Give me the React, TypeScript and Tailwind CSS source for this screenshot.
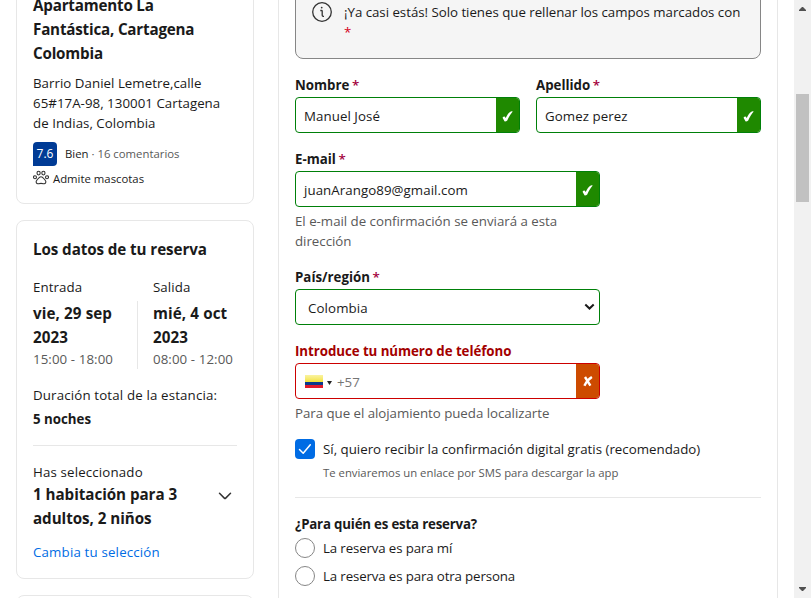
import type { ReactNode } from "react";

function Star({ className = "text-[#a3003c]" }: { className?: string }) {
  return <span className={className}>*</span>;
}

function Label({ children }: { children: ReactNode }) {
  return <div className="h-5 text-[13.3px]/5 font-bold whitespace-nowrap">{children} <Star className="-ml-px font-semibold text-[#a3003c]" /></div>;
}

function CheckMark() {
  return (
    <svg width="11" height="11" viewBox="0 0 12 12" fill="#fff">
      <path d="M0.600 7.300Q1.500 6 2.800 6.100L4.100 7.700C5.400 4.400 7.400 1.700 9.600 0.500Q10.800 0.100 11.700 0.600C9.200 3.400 7.300 6.700 5.700 10.300Q4.400 11.500 2.700 11.300Z" />
    </svg>
  );
}

function CrossMark() {
  return (
    <svg width="10" height="11" viewBox="0 0 10 11" fill="none" stroke="#fff" strokeWidth="2.4">
      <path d="M2 1 7.400 9.600M8.900 1C5.400 3.200 3.200 5.800 1.400 9.800" />
    </svg>
  );
}

function ValidField({ value }: { value: string }) {
  return (
    <div className="flex h-9 overflow-hidden rounded border border-[#008009] bg-white">
      <div className="flex flex-1 items-center pt-px pl-2 text-[13.3px]/5 tracking-[0.06px]">{value}</div>
      <div className="flex w-[23px] items-center justify-center bg-[#1f8900] pt-[3px] pr-px">
        <CheckMark />
      </div>
    </div>
  );
}

function StayDate({ title, date, time }: { title: string; date: string; time: string }) {
  return (
    <div>
      <div className="text-[13.3px]/5 tracking-[0.08px]">{title}</div>
      <div className="mt-1 w-[84px] text-[15.2px]/6 font-bold tracking-[0.1px]">{date}</div>
      <div className="text-[13.3px]/5 tracking-[0.08px] whitespace-nowrap text-[#595959]">{time}</div>
    </div>
  );
}

function Sidebar() {
  return (
    <aside className="ml-4 flex w-[238px] shrink-0 flex-col gap-4">
      <section className="-mt-6 h-[228px] shrink-0 rounded-lg border border-[#e7e7e7] px-4 pt-4">
        <h2 className="text-[15.2px]/6 font-bold tracking-[-0.2px]">
          Apartamento La
          <br />
          Fantástica, Cartagena
          <br />
          Colombia
        </h2>
        <p className="mt-2 text-[13.3px]/5 tracking-[0.03px] whitespace-nowrap">
          Barrio Daniel Lemetre,calle
          <br />
          65#17A-98, 130001 Cartagena
          <br />
          de Indias, Colombia
        </p>
        <div className="mt-[9px] flex h-6 items-center gap-2 text-[11.35px]">
          <span className="flex size-6 items-center justify-center rounded-t rounded-br bg-[#003b95] text-xs text-white">7.6</span>
          <span className="whitespace-nowrap">
            Bien <span className="text-[#595959]">· 16 comentarios</span>
          </span>
        </div>
        <div className="mt-1 flex items-center gap-1 text-[11.35px]/[18px]">
          <svg className="-mt-0.5" width="16" height="16" viewBox="0 0 16 16" fill="none" stroke="#333" strokeWidth="1.1">
            <ellipse cx="5.600" cy="3.100" rx="1.600" ry="1.900" />
            <ellipse cx="10.400" cy="3.100" rx="1.600" ry="1.900" />
            <circle cx="2" cy="7.200" r="1.500" />
            <circle cx="14" cy="7.200" r="1.500" />
            <path d="M8 6.700c-2 0-2.400 1.800-3.900 3.200-2 1.800-.6 4.300 1.400 3.800 1.700-.5 3.300-.5 5 0 2 .5 3.400-2 1.400-3.800C10.400 8.500 10 6.700 8 6.700Z" />
          </svg>
          Admite mascotas
        </div>
      </section>

      <section className="h-[359px] shrink-0 rounded-lg border border-[#e7e7e7] px-4 pt-4">
        <h2 className="text-[15.2px]/6 font-bold tracking-[-0.09px]">Los datos de tu reserva</h2>
        <div className="mt-4 flex">
          <StayDate title="Entrada" date="vie, 29 sep 2023" time="15:00 - 18:00" />
          <div className="mt-6 mr-[15px] ml-5 h-[68px] w-px bg-[#e7e7e7]" />
          <StayDate title="Salida" date="mié, 4 oct 2023" time="08:00 - 12:00" />
        </div>
        <div className="mt-4 text-[13.3px]/5 font-medium tracking-[0.15px] whitespace-nowrap">Duración total de la estancia:</div>
        <div className="mt-1 text-[13.3px]/5 font-bold">5 noches</div>
        <hr className="mt-4 border-[#e7e7e7]" />
        <div className="mt-4 text-[13.3px]/5 tracking-[0.15px]">Has seleccionado</div>
        <div className="flex items-start justify-between">
          <div className="text-[15.2px]/6 font-bold tracking-[-0.05px]">
            1 habitación para 3
            <br />
            adultos, 2 niños
          </div>
          <svg className="mt-2.5 mr-[5px]" width="14" height="8" viewBox="0 0 14 8" fill="none" stroke="#333" strokeWidth="1.5" strokeLinecap="round" strokeLinejoin="round">
            <path d="M1.500 1.300 6.300 6.100Q7 6.700 7.700 6.100L12.500 1.300" />
          </svg>
        </div>
        <a className="mt-3 block text-[13.3px]/5 font-medium tracking-[0.17px] text-[#006ce4]">Cambia tu selección</a>
      </section>
      <section className="h-20 shrink-0 rounded-lg border border-[#e7e7e7]" />
    </aside>
  );
}

function Radio({ children }: { children: ReactNode }) {
  return (
    <div className="flex h-5 items-center gap-2 text-[13.3px]/5 tracking-[-0.14px]">
      <span className="size-5 rounded-full border border-[#868686]" />
      {children}
    </div>
  );
}

function FormPanel() {
  return (
    <main className="ml-6 h-[620px] w-[500px] shrink-0 border-x border-[#e7e7e7] px-4">
      <div className="-mt-10 flex h-[99px] gap-3 rounded-lg border border-[#868686] bg-[#f5f5f5] pt-[41px] pl-4">
        <svg className="shrink-0" width="20" height="20" viewBox="0 0 20 20" fill="none" stroke="#333" strokeWidth="1.300">
          <circle cx="10" cy="10" r="9.300" />
          <path d="M8.300 8.500H9.500Q10.200 8.500 10.200 9.300V13.200Q10.200 14.300 11.200 14.300H12" />
          <circle cx="9.700" cy="5.600" r="0.900" fill="#333" stroke="none" />
        </svg>
        <div className="text-[13.3px]/5 tracking-[-0.03px] whitespace-nowrap">
          ¡Ya casi estás! Solo tienes que rellenar los campos marcados con
          <br />
          <Star className="text-[#d4001a]" />
        </div>
      </div>

      <div className="mt-4 grid grid-cols-2 gap-4">
        <div>
          <Label>Nombre</Label>
          <div className="mt-0.5"><ValidField value="Manuel José" /></div>
        </div>
        <div>
          <Label>Apellido</Label>
          <div className="mt-0.5"><ValidField value="Gomez perez" /></div>
        </div>
      </div>

      <div className="w-[305px]">
        <div className="mt-4">
          <Label>E-mail</Label>
          <div className="mt-0.5"><ValidField value="juanArango89@gmail.com" /></div>
          <p className="mt-1 text-[13.3px]/5 tracking-[-0.02px] whitespace-nowrap text-[#595959]">
            El e-mail de confirmación se enviará a esta
            <br />
            dirección
          </p>
        </div>
        <div className="mt-4">
          <Label>País/región</Label>
          <div className="mt-0.5 flex h-9 items-center justify-between rounded border border-[#008009] pr-1 pl-3 text-[13.3px]/5">
            <span className="pt-0.5 tracking-[0.1px]">Colombia</span>
            <svg width="11" height="8" viewBox="0 0 11 8" fill="none" stroke="#1a1a1a" strokeWidth="2">
              <path d="M1.300 1.500 5.500 5.500 9.700 1.500" />
            </svg>
          </div>
        </div>
        <div className="mt-4">
          <div className="text-[13.3px]/5 font-bold tracking-[-0.06px] whitespace-nowrap text-[#a30000]">Introduce tu número de teléfono</div>
          <div className="mt-0.5 flex h-9 overflow-hidden rounded border border-[#cc0000]">
            <div className="flex flex-1 items-center pl-[9px] text-[13.3px]/5 text-[#757575]">
              <span className="flex h-[13px] w-[18px] flex-col">
                <span className="h-[7px] bg-linear-to-b from-[#faf3a0] to-[#f3e22c]" />
                <span className="h-[3px] bg-[#0a3a8c]" />
                <span className="h-[3px] bg-[#e01a2b]" />
              </span>
              <svg className="mt-[3px] mr-[5px] ml-1" width="5" height="4" viewBox="0 0 5 4" fill="#222">
                <path d="M0 0H5L2.500 4Z" />
              </svg>
              <span className="pt-0.5">+57</span>
            </div>
            <div className="flex w-[23px] items-center justify-center bg-[#cd4b00]">
              <CrossMark />
            </div>
          </div>
          <p className="mt-1 text-[13.3px]/5 tracking-[-0.04px] whitespace-nowrap text-[#595959]">Para que el alojamiento pueda localizarte</p>
        </div>
      </div>

      <div className="mt-4 flex gap-2 whitespace-nowrap">
        <span className="flex size-5 shrink-0 items-center justify-center rounded bg-[#006ce4]">
          <svg width="14" height="12" viewBox="0 0 14 12" fill="none" stroke="#fff" strokeWidth="1.500" strokeLinecap="round" strokeLinejoin="round">
            <path d="M1.500 6.500 5.200 10.200 12.300 1.800" />
          </svg>
        </span>
        <div>
          <div className="text-[13.3px]/5">Sí, quiero recibir la confirmación digital gratis (recomendado)</div>
          <div className="mt-[5px] text-[11.35px]/[18px] tracking-[-0.01px] text-[#595959]">Te enviaremos un enlace por SMS para descargar la app</div>
        </div>
      </div>
      <hr className="mt-[15px] border-[#e7e7e7]" />
      <div className="mt-4 text-[13.3px]/5 font-bold tracking-[-0.2px]">¿Para quién es esta reserva?</div>
      <div className="mt-1 flex flex-col gap-2">
        <Radio>La reserva es para mí</Radio>
        <Radio>La reserva es para otra persona</Radio>
      </div>
    </main>
  );
}

function ScrollBar() {
  return (
    <div className="ml-4 flex h-full w-[17px] shrink-0 flex-col items-center bg-[#f1f1f1]">
      <svg className="mt-[7px] shrink-0" width="7" height="4" viewBox="0 0 7 4" fill="#505050">
        <path d="M3 0H4L7 3V4H0V3Z" />
      </svg>
      <div className="mt-[83px] h-[108px] w-[13px] bg-[#c1c1c1]" />
      <svg className="mt-auto mb-[7px] shrink-0" width="7" height="4" viewBox="0 0 7 4" fill="#505050">
        <path d="M0 0H7V1L4 4H3L0 1Z" />
      </svg>
    </div>
  );
}

export default function App() {
  return (
    <div className="flex h-[598px] w-[811px] overflow-hidden bg-white font-['Open_Sans','Noto_Sans',sans-serif] text-[#1a1a1a]">
      <Sidebar />
      <FormPanel />
      <ScrollBar />
    </div>
  );
}
